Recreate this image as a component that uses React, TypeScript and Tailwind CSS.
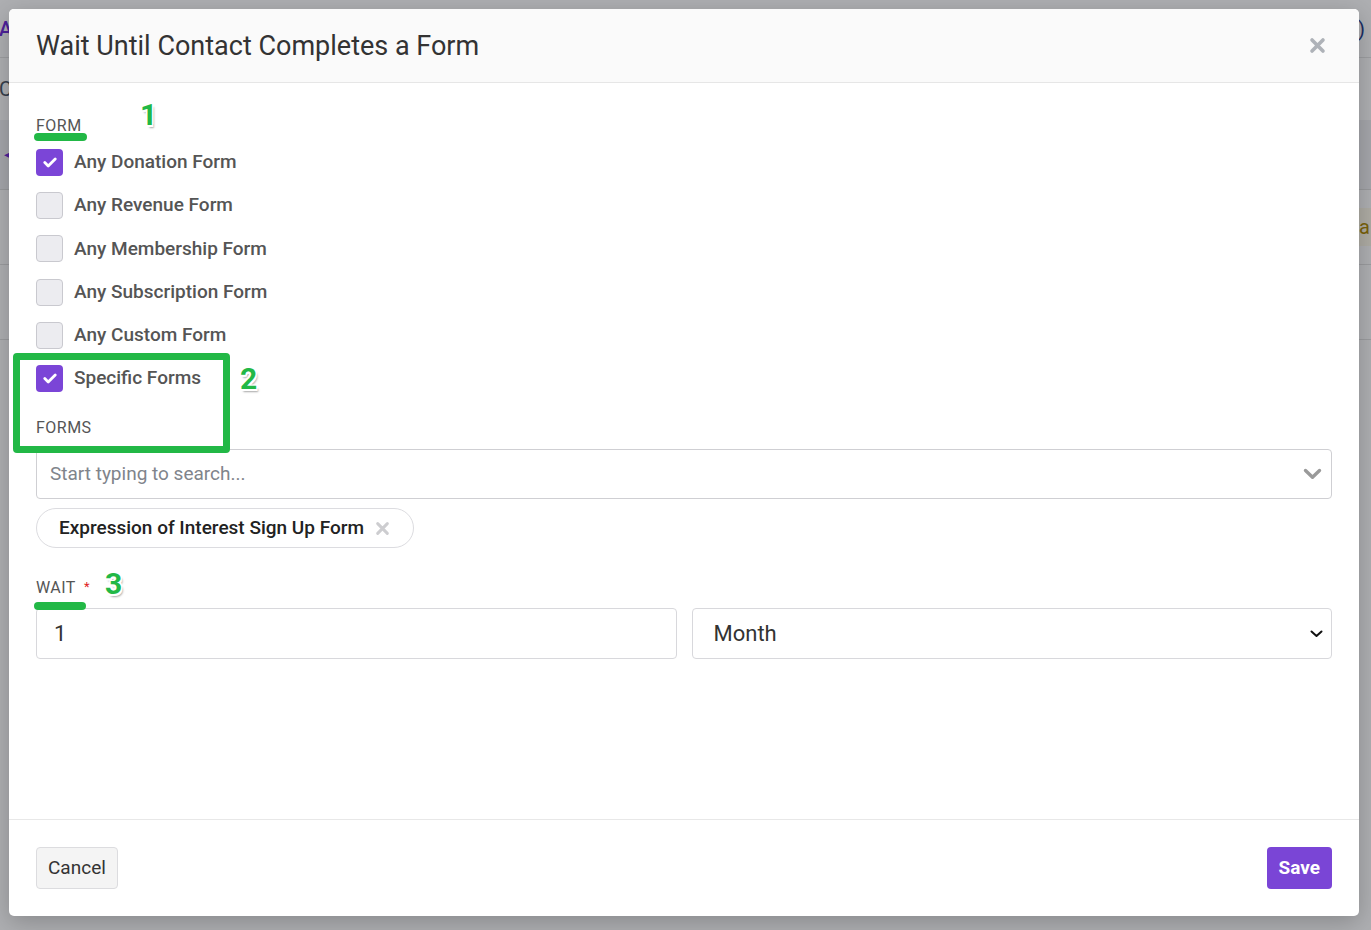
import React from "react";

const GREEN = "bg-[#22b846]";

function Check() {
  return (
    <svg width="14" height="11" viewBox="0 0 14 11" fill="none">
      <path d="M1.8 5.6 5.2 9 12.2 2" stroke="#fff" strokeWidth="2.8" strokeLinecap="round" strokeLinejoin="round" />
    </svg>
  );
}

function Times({ size, color, width }: { size: number; color: string; width: number }) {
  return (
    <svg width={size} height={size} viewBox="0 0 14 14" fill="none">
      <path d="M2.5 2.5 11.5 11.5M11.5 2.5 2.5 11.5" stroke={color} strokeWidth={width} strokeLinecap="round" />
    </svg>
  );
}

function Box({ checked, label }: { checked?: boolean; label: string }) {
  return (
    <label className="flex items-center gap-[11px] h-[27px]">
      {checked ? (
        <span className="w-[27px] h-[27px] rounded-[4px] bg-[#7b45d7] flex items-center justify-center">
          <Check />
        </span>
      ) : (
        <span className="w-[27px] h-[27px] rounded-[4px] bg-[#ececf0] border border-[#c9c9cf]" />
      )}
      <span className="text-[19px] font-medium text-[#555]">{label}</span>
    </label>
  );
}

function Mark({ n, className }: { n: string; className: string }) {
  return (
    <span
      className={`absolute text-[30px] leading-[30px] font-bold text-[#22b846] [text-shadow:-1.5px_-1.5px_0_#fff,1.5px_-1.5px_0_#fff,-1.5px_1.5px_0_#fff,1.5px_1.5px_0_#fff,0_1.5px_0_#fff,2px_2.5px_2px_rgba(0,0,0,0.35)] ${className}`}
    >
      {n}
    </span>
  );
}

export default function App() {
  return (
    <div className="relative w-[1371px] h-[930px] overflow-hidden bg-white font-['Roboto',sans-serif]">
      {/* page behind the dialog */}
      <div className="flex flex-col">
        <div className="h-[58px] border-b border-[#e5e5e5] flex items-center justify-between">
          <span className="text-[20px] font-medium text-[#6d28d9] -ml-[1px]">All</span>
          <span className="text-[20px] text-[#1e3a8a] mr-[6px]">(0)</span>
        </div>
        <div className="h-[62px] flex items-center">
          <span className="text-[20px] text-[#4b5563] -ml-[1px]">Co</span>
        </div>
        <div className="h-[70px] bg-[#f2f2f4] border-b border-[#dedede] flex items-center pl-[4px]">
          <span className="text-[14px] text-[#6d28d9]">◂</span>
        </div>
        <div className="h-[75px] border-b border-[#e2e2e2] flex items-center justify-end">
          <span className="h-[38px] pl-[6px] pr-[1px] bg-[#fffbea] text-[#b08a00] text-[20px] flex items-center">Pa</span>
        </div>
        <div className="h-[75px] border-b border-[#e2e2e2]" />
      </div>

      {/* dim layer */}
      <div className="absolute inset-0 bg-[rgba(18,20,30,0.34)]" />

      {/* dialog */}
      <div className="absolute left-[9px] top-[9px] w-[1350px] h-[907px] bg-white rounded-[5px] flex flex-col shadow-[0_6px_24px_rgba(0,0,0,0.22)]">
        <div className="h-[74px] shrink-0 bg-[#fafafa] border-b border-[#e6e6e6] rounded-t-[5px] flex items-center justify-between pl-[27px] pr-[33px]">
          <h2 className="text-[27px] leading-[32px] text-[#333] pt-[1px]">Wait Until Contact Completes a Form</h2>
          <Times size={17} color="#aeb2b8" width={3} />
        </div>

        <div className="flex-1 px-[27px] pt-[33px] flex flex-col">
          <div className="text-[16px] leading-[20px] tracking-[0.03em] text-[#555] mb-[13px]">FORM</div>
          <div className="flex flex-col gap-[16.2px]">
            <Box checked label="Any Donation Form" />
            <Box label="Any Revenue Form" />
            <Box label="Any Membership Form" />
            <Box label="Any Subscription Form" />
            <Box label="Any Custom Form" />
            <Box checked label="Specific Forms" />
          </div>

          <div className="mt-[26px] text-[16px] leading-[20px] tracking-[0.03em] text-[#555]">FORMS</div>
          <div className="mt-[11.5px] h-[50px] border border-[#cfcfd3] rounded-[4px] flex items-center justify-between pl-[13px] pr-[9px]">
            <span className="text-[19px] text-[#80848b]">Start typing to search...</span>
            <svg width="19" height="12" viewBox="0 0 19 12" fill="none">
              <path d="M2.5 2.5 9.5 9.2 16.5 2.5" stroke="#9a9a9a" strokeWidth="3.4" strokeLinecap="round" strokeLinejoin="round" />
            </svg>
          </div>
          <div className="mt-[9px] self-start h-[40px] rounded-full border border-[#dcdce0] flex items-center gap-[11px] pl-[22px] pr-[23px]">
            <span className="text-[19px] font-medium text-[#222]">Expression of Interest Sign Up Form</span>
            <Times size={15} color="#cdcdd0" width={2.8} />
          </div>

          <div className="mt-[30px] flex items-start text-[16px] leading-[20px] tracking-[0.03em] text-[#555]">
            WAIT<span className="text-[#e02424] text-[13px] ml-[8px] -mt-[1px]">*</span>
          </div>
          <div className="mt-[10px] grid grid-cols-2 gap-[15px]">
            <div className="h-[51px] border border-[#d8d8dc] rounded-[4px] flex items-center pl-[17px]">
              <span className="text-[22px] text-[#333]">1</span>
            </div>
            <div className="h-[51px] border border-[#d8d8dc] rounded-[4px] flex items-center justify-between pl-[21px] pr-[8px]">
              <span className="text-[22px] text-[#333]">Month</span>
              <svg width="13" height="8" viewBox="0 0 13 8" fill="none">
                <path d="M1.5 1.5 6.5 6 11.5 1.5" stroke="#111" strokeWidth="2" strokeLinecap="round" strokeLinejoin="round" />
              </svg>
            </div>
          </div>
        </div>

        <div className="h-[97px] shrink-0 border-t border-[#e8e8e8] flex items-center justify-between px-[27px]">
          <button className="h-[42px] px-[11px] rounded-[4px] bg-[#f4f4f4] border border-[#dcdcdf] text-[19px] text-[#333]">
            Cancel
          </button>
          <button className="h-[42px] px-[12px] rounded-[4px] bg-[#7a45d6] text-[19px] font-bold text-white">
            Save
          </button>
        </div>

        {/* annotation overlays */}
        <div className={`absolute left-[25px] top-[124px] w-[53px] h-[8px] rounded-full ${GREEN}`} />
        <div className={`absolute left-[25px] top-[593px] w-[52px] h-[8px] rounded-full ${GREEN}`} />
        <div className="absolute left-[4px] top-[344px] w-[217px] h-[100px] border-[7px] border-[#22b846] rounded-[4px]" />
        <Mark n="1" className="left-[131px] top-[91px]" />
        <Mark n="2" className="left-[231px] top-[355px]" />
        <Mark n="3" className="left-[96px] top-[560px]" />
      </div>
    </div>
  );
}
